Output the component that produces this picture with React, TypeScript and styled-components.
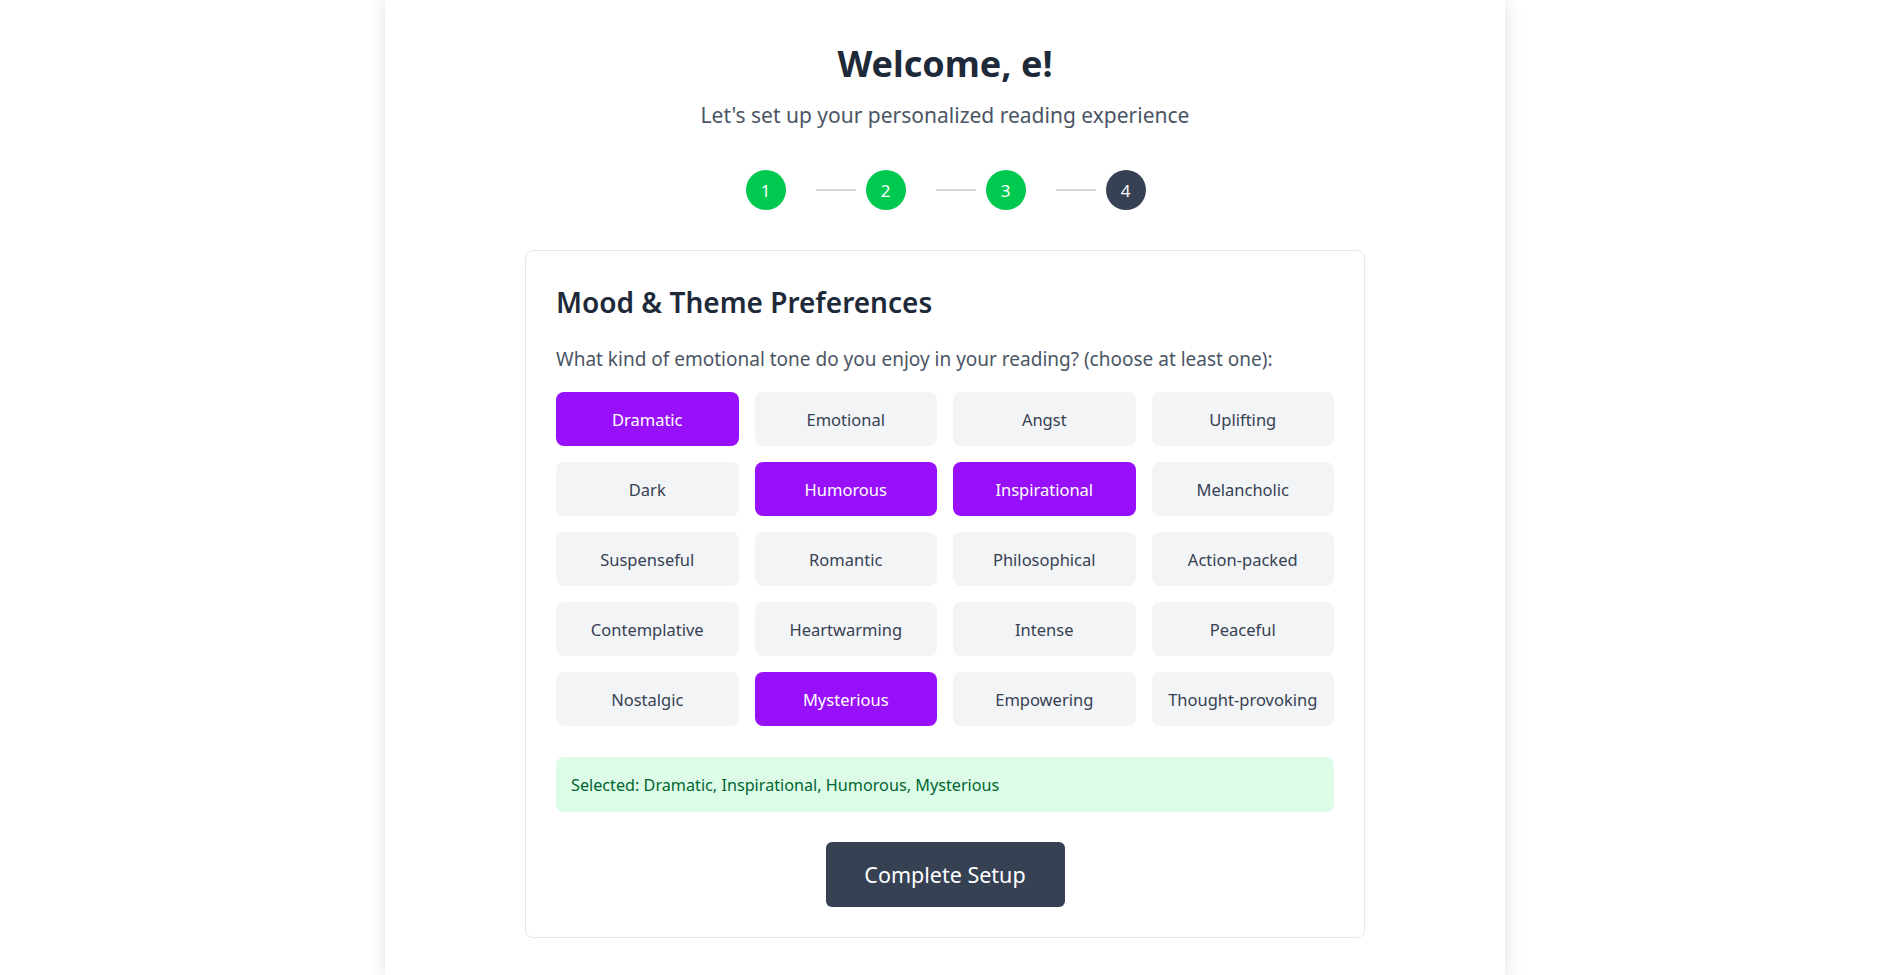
import React from "react";
import styled, { createGlobalStyle } from "styled-components";

const GlobalStyle = createGlobalStyle`
  html, body {
    margin: 0;
    padding: 0;
    background: #ffffff;
  }
  body {
    font-family: "Noto Sans", "Open Sans", Arial, sans-serif;
    color: #1e2939;
  }
  * { box-sizing: border-box; }
`;

const Page = styled.div`
  width: 1120px;
  margin: 0 auto;
  min-height: 100vh;
  background: #ffffff;
  box-shadow: 0 0 18px rgba(0, 0, 0, 0.12);
  padding: 42px 0 40px 1px;
`;

const Header = styled.header`
  text-align: center;
`;

const Title = styled.h1`
  margin: 0;
  font-size: 36px;
  line-height: 44px;
  font-weight: 700;
  color: #1e2939;
`;

const Subtitle = styled.p`
  margin: 15px 0 0;
  font-size: 21px;
  line-height: 28px;
  color: #4a5565;
`;

const Steps = styled.div`
  display: flex;
  justify-content: center;
  align-items: center;
  margin-top: 41px;
  padding-left: 1px;
`;

const StepCircle = styled.div<{ $active?: boolean }>`
  width: 40px;
  height: 40px;
  border-radius: 50%;
  display: flex;
  align-items: center;
  justify-content: center;
  background: ${(p) => (p.$active ? "#364153" : "#00c950")};
  color: #ffffff;
  font-size: 17px;
`;

const StepLine = styled.div`
  width: 40px;
  height: 2px;
  background: #d1d5dc;
  margin: 0 10px 0 30px;
`;

const Card = styled.section`
  width: 840px;
  margin: 40px auto 0;
  border: 1px solid #e5e7eb;
  border-radius: 8px;
  padding: 30px;
  background: #ffffff;
`;

const CardTitle = styled.h2`
  margin: 0;
  font-size: 28px;
  line-height: 42px;
  font-weight: 600;
  color: #1e2939;
`;

const Question = styled.p`
  margin: 23px 0 0;
  font-size: 19px;
  line-height: 26px;
  color: #4a5565;
`;

const OptionGrid = styled.div`
  display: grid;
  grid-template-columns: repeat(4, 1fr);
  gap: 16px;
  margin-top: 20px;
`;

const Option = styled.button<{ $selected?: boolean }>`
  height: 54px;
  border: none;
  border-radius: 8px;
  font-family: inherit;
  font-size: 16.5px;
  cursor: pointer;
  background: ${(p) => (p.$selected ? "#9810fa" : "#f3f4f6")};
  color: ${(p) => (p.$selected ? "#ffffff" : "#364153")};
`;

const SelectedBox = styled.div`
  margin-top: 31px;
  background: #dcfce7;
  color: #016630;
  border-radius: 8px;
  padding: 16px 15px 15px;
  font-size: 16.2px;
  line-height: 24px;
`;

const Actions = styled.div`
  display: flex;
  justify-content: center;
  margin-top: 30px;
`;

const PrimaryButton = styled.button`
  height: 65px;
  width: 239px;
  border: none;
  border-radius: 6px;
  background: #364153;
  color: #ffffff;
  font-family: inherit;
  font-size: 21.5px;
  cursor: pointer;
`;

const moods = [
  "Dramatic", "Emotional", "Angst", "Uplifting",
  "Dark", "Humorous", "Inspirational", "Melancholic",
  "Suspenseful", "Romantic", "Philosophical", "Action-packed",
  "Contemplative", "Heartwarming", "Intense", "Peaceful",
  "Nostalgic", "Mysterious", "Empowering", "Thought-provoking",
];

const selected = ["Dramatic", "Inspirational", "Humorous", "Mysterious"];

export default function App() {
  return (
    <>
      <GlobalStyle />
      <Page>
        <Header>
          <Title>Welcome, e!</Title>
          <Subtitle>Let's set up your personalized reading experience</Subtitle>
        </Header>
        <Steps>
          <StepCircle>1</StepCircle>
          <StepLine />
          <StepCircle>2</StepCircle>
          <StepLine />
          <StepCircle>3</StepCircle>
          <StepLine />
          <StepCircle $active>4</StepCircle>
        </Steps>
        <Card>
          <CardTitle>Mood &amp; Theme Preferences</CardTitle>
          <Question>
            What kind of emotional tone do you enjoy in your reading? (choose at least one):
          </Question>
          <OptionGrid>
            {moods.map((m) => (
              <Option key={m} $selected={selected.includes(m)}>
                {m}
              </Option>
            ))}
          </OptionGrid>
          <SelectedBox>Selected: {selected.join(", ")}</SelectedBox>
          <Actions>
            <PrimaryButton>Complete Setup</PrimaryButton>
          </Actions>
        </Card>
      </Page>
    </>
  );
}
